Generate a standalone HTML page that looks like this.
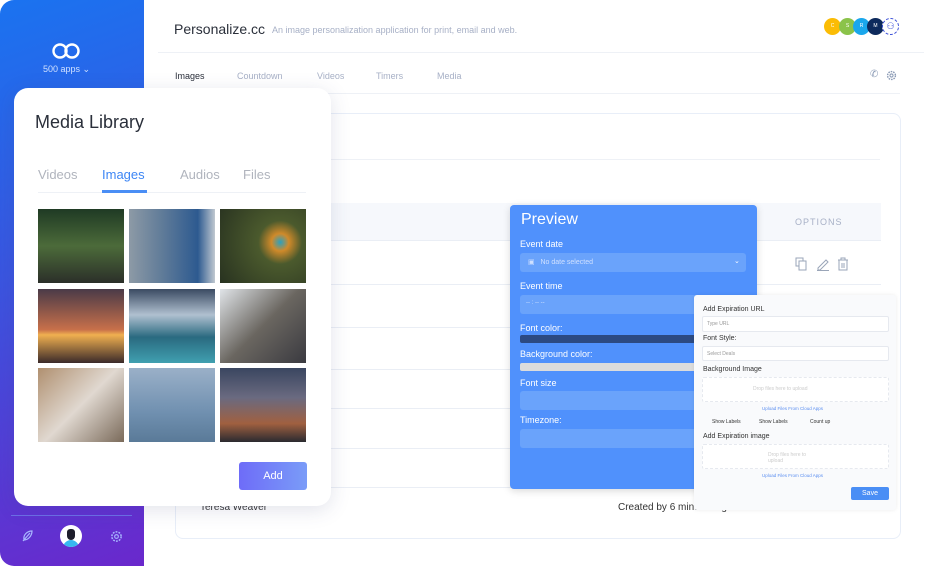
<!DOCTYPE html>
<html><head><meta charset="utf-8"><style>
*{box-sizing:border-box;margin:0;padding:0}
body{width:940px;height:566px;overflow:hidden;background:#fff;font-family:"Liberation Sans",sans-serif;position:relative}
.abs{position:absolute}
.side{left:0;top:0;width:144px;height:566px;border-radius:14px 0 0 14px;background:linear-gradient(160deg,#1a73f0 0%,#3a55e0 45%,#6a28cc 100%)}
.t{position:absolute;white-space:nowrap}
.ph{position:absolute;width:86px;height:74px}
.inp{position:absolute;background:#6aa3fb;border-radius:3px}
.lbl{position:absolute;color:#fff;font-size:9px}
.rl{position:absolute;font-size:7px;color:#333}
.ri{position:absolute;border:1px solid #e6e9ef;background:#fff;border-radius:2px;left:702px;width:187px}
</style></head><body>
<div class="abs side"></div>
<svg class="abs" style="left:52px;top:42px" width="28" height="18" viewBox="0 0 28 18"><circle cx="8" cy="9" r="6.5" fill="none" stroke="#fff" stroke-width="2.4"/><circle cx="20" cy="9" r="6.5" fill="none" stroke="#fff" stroke-width="2.4"/></svg>
<div class="t" style="left:43px;top:64px;font-size:9px;color:#cfe0ff">500 apps ⌄</div>
<div class="abs" style="left:11px;top:515px;width:121px;height:1px;background:#6c6fe6"></div>
<svg class="abs" style="left:20px;top:529px" width="14" height="14" viewBox="0 0 14 14"><path d="M3 12L10 4M4 11C3 6 7 2 12 2C12 7 8 11 4 11" fill="none" stroke="#a9b8ff" stroke-width="1.2"/></svg>
<div class="abs" style="left:60px;top:525px;width:22px;height:22px;border-radius:50%;background:#fff;overflow:hidden"><div class="abs" style="left:3px;top:15px;width:16px;height:10px;border-radius:8px 8px 0 0;background:#37b7f0"></div><div class="abs" style="left:7px;top:4px;width:8px;height:11px;border-radius:4px 4px 5px 5px;background:#1d1d2b"></div></div>
<svg class="abs" style="left:110px;top:530px" width="13" height="13" viewBox="0 0 14 14"><circle cx="7" cy="7" r="2" fill="none" stroke="#a9b8ff" stroke-width="1.2"/><circle cx="7" cy="7" r="5" fill="none" stroke="#a9b8ff" stroke-width="1.6" stroke-dasharray="2 1.2"/></svg>

<div class="t" style="left:174px;top:21px;font-size:14px;color:#2a2f3a">Personalize.cc</div>
<div class="t" style="left:272px;top:25px;font-size:9px;color:#a7b0c6">An image personalization application for print, email and web.</div>
<div class="abs" style="left:158px;top:52px;width:766px;height:1px;background:#eef1f6"></div>
<div class="abs" style="left:824px;top:18px;width:17px;height:17px;border-radius:50%;background:#fbbc05;color:#fff;font-size:5px;text-align:center;line-height:17px">C</div>
<div class="abs" style="left:839px;top:18px;width:17px;height:17px;border-radius:50%;background:#8bc34a;color:#fff;font-size:5px;text-align:center;line-height:17px">S</div>
<div class="abs" style="left:853px;top:18px;width:17px;height:17px;border-radius:50%;background:#1aa7ec;color:#fff;font-size:5px;text-align:center;line-height:17px">R</div>
<div class="abs" style="left:867px;top:18px;width:17px;height:17px;border-radius:50%;background:#0d2a5c;color:#fff;font-size:5px;text-align:center;line-height:17px">M</div>
<div class="abs" style="left:882px;top:18px;width:17px;height:17px;border-radius:50%;border:1px dashed #3b4fd8;background:#fff;color:#3b4fd8;font-size:9px;text-align:center;line-height:15px">⚇</div>
<div class="t" style="left:175px;top:71px;font-size:9px;color:#2a2f3a">Images</div>
<div class="t" style="left:237px;top:71px;font-size:9px;color:#a7b0c6">Countdown</div>
<div class="t" style="left:317px;top:71px;font-size:9px;color:#a7b0c6">Videos</div>
<div class="t" style="left:376px;top:71px;font-size:9px;color:#a7b0c6">Timers</div>
<div class="t" style="left:437px;top:71px;font-size:9px;color:#a7b0c6">Media</div>
<div class="t" style="left:870px;top:69px;font-size:10px;color:#8a9ab5">✆</div>
<svg class="abs" style="left:886px;top:70px" width="11" height="11" viewBox="0 0 14 14"><circle cx="7" cy="7" r="2" fill="none" stroke="#8a9ab5" stroke-width="1.3"/><circle cx="7" cy="7" r="5" fill="none" stroke="#8a9ab5" stroke-width="1.8" stroke-dasharray="2 1.2"/></svg>
<div class="abs" style="left:158px;top:93px;width:742px;height:1px;background:#eef1f6"></div>

<div class="abs" style="left:175px;top:113px;width:726px;height:426px;border:1.5px solid #e8eef8;border-radius:8px"></div>
<div class="abs" style="left:330px;top:159px;width:550px;height:1px;background:#eef1f6"></div>
<div class="abs" style="left:330px;top:203px;width:551px;height:37px;background:#f6f8fc"></div>
<div class="t" style="left:795px;top:217px;font-size:9px;letter-spacing:1px;color:#a7b0c6">OPTIONS</div>
<div class="abs" style="left:330px;top:240px;width:551px;height:1px;background:#eaeef5"></div>
<div class="abs" style="left:330px;top:284px;width:551px;height:1px;background:#eaeef5"></div>
<div class="abs" style="left:330px;top:327px;width:551px;height:1px;background:#eaeef5"></div>
<div class="abs" style="left:330px;top:369px;width:551px;height:1px;background:#eaeef5"></div>
<div class="abs" style="left:330px;top:408px;width:551px;height:1px;background:#eaeef5"></div>
<div class="abs" style="left:330px;top:448px;width:551px;height:1px;background:#eaeef5"></div>
<div class="abs" style="left:175px;top:487px;width:706px;height:1px;background:#eaeef5"></div>
<svg class="abs" style="left:795px;top:257px" width="56" height="14" viewBox="0 0 56 14"><rect x="1" y="1" width="7" height="8" fill="none" stroke="#9aa5b8"/><rect x="4" y="4" width="7" height="9" fill="#fff" stroke="#9aa5b8"/><path d="M23 11L31 3L33 5L25 13H23ZM22 13.5H34" fill="none" stroke="#9aa5b8"/><path d="M43 3H53M46 3V1H50V3M44 3V13H52V3M47 6V11M49 6V11" fill="none" stroke="#9aa5b8"/></svg>
<div class="t" style="left:200px;top:502px;font-size:10px;color:#333">Teresa Weaver</div>
<div class="t" style="left:618px;top:502px;font-size:10px;color:#333">Created by 6 minutes ago</div>

<div class="abs" style="left:14px;top:88px;width:317px;height:418px;background:#fff;border-radius:14px;box-shadow:0 4px 20px rgba(60,70,120,.15)"></div>
<div class="t" style="left:35px;top:112px;font-size:18px;color:#2a2f3a">Media Library</div>
<div class="t" style="left:38px;top:167px;font-size:13px;color:#b0b4bd">Videos</div>
<div class="t" style="left:102px;top:167px;font-size:13px;color:#3d86f5">Images</div>
<div class="t" style="left:180px;top:167px;font-size:13px;color:#b0b4bd">Audios</div>
<div class="t" style="left:243px;top:167px;font-size:13px;color:#b0b4bd">Files</div>
<div class="abs" style="left:38px;top:192px;width:268px;height:1px;background:#eef1f6"></div>
<div class="abs" style="left:102px;top:190px;width:45px;height:3px;background:#4a8ef5"></div>
<div class="ph" style="left:38px;top:209px;background:linear-gradient(180deg,#1f3a24,#4c6b3a 50%,#2b2f29)"></div>
<div class="ph" style="left:129px;top:209px;background:linear-gradient(90deg,#8d9aa6,#5e7a98 40%,#2d5a90 80%,#c0c8d0)"></div>
<div class="ph" style="left:220px;top:209px;background:radial-gradient(circle at 70% 45%,#2aa0c0 0,#d08a2a 12%,#4b5a2d 30%,#283220)"></div>
<div class="ph" style="left:38px;top:289px;background:linear-gradient(180deg,#4a3a48,#c8704a 55%,#f0b050 62%,#3a2a2a)"></div>
<div class="ph" style="left:129px;top:289px;background:linear-gradient(180deg,#3a4a62,#b0c0d0 35%,#2a6a80 65%,#40a0b0)"></div>
<div class="ph" style="left:220px;top:289px;background:linear-gradient(135deg,#e0e4e8,#6a6660 50%,#3a3a40)"></div>
<div class="ph" style="left:38px;top:368px;background:linear-gradient(135deg,#b09070,#e0d8d0 50%,#7a6a5a)"></div>
<div class="ph" style="left:129px;top:368px;background:linear-gradient(180deg,#9ab0c8,#7090b0 60%,#5a7a98)"></div>
<div class="ph" style="left:220px;top:368px;background:linear-gradient(180deg,#3a4660,#6a6a80 40%,#a06040 75%,#2a2a30)"></div>
<div class="abs" style="left:239px;top:462px;width:68px;height:28px;border-radius:3px;background:linear-gradient(90deg,#6e6cf8,#7a9cf8);color:#fff;font-size:11px;text-align:center;line-height:28px">Add</div>

<div class="abs" style="left:510px;top:205px;width:247px;height:284px;background:#5091fc;border-radius:4px;box-shadow:0 2px 8px rgba(0,0,0,.15)"></div>
<div class="t" style="left:521px;top:211px;font-size:16px;color:#fff">Preview</div>
<div class="lbl" style="left:520px;top:239px">Event date</div>
<div class="inp" style="left:520px;top:253px;width:226px;height:19px"></div>
<div class="t" style="left:528px;top:258px;font-size:7px;color:#cfe0ff">▣ &nbsp;&nbsp;No date selected</div>
<div class="t" style="left:734px;top:257px;font-size:7px;color:#fff">⌄</div>
<div class="lbl" style="left:520px;top:281px">Event time</div>
<div class="inp" style="left:520px;top:295px;width:180px;height:19px"></div>
<div class="t" style="left:526px;top:300px;font-size:6px;color:#cfe0ff">-- : -- --</div>
<div class="lbl" style="left:520px;top:323px">Font color:</div>
<div class="abs" style="left:520px;top:335px;width:180px;height:8px;background:#2c4a82;border-radius:2px"></div>
<div class="lbl" style="left:520px;top:349px">Background color:</div>
<div class="abs" style="left:520px;top:363px;width:180px;height:8px;background:#dcdcdc;border-radius:2px"></div>
<div class="lbl" style="left:520px;top:378px">Font size</div>
<div class="inp" style="left:520px;top:391px;width:180px;height:19px"></div>
<div class="lbl" style="left:520px;top:415px">Timezone:</div>
<div class="inp" style="left:520px;top:429px;width:180px;height:19px"></div>

<div class="abs" style="left:694px;top:295px;width:202px;height:215px;background:#f9fafc;border-radius:3px;box-shadow:0 0 4px rgba(0,0,0,.08)"></div>
<div class="rl" style="left:703px;top:306px">Add Expiration URL</div>
<div class="ri" style="top:316px;height:16px"></div>
<div class="t" style="left:707px;top:321px;font-size:5px;color:#999">Type URL</div>
<div class="rl" style="left:703px;top:335px">Font Style:</div>
<div class="ri" style="top:346px;height:15px"></div>
<div class="t" style="left:707px;top:351px;font-size:5px;color:#999">Select Deals</div>
<div class="rl" style="left:703px;top:366px">Background Image</div>
<div class="ri" style="top:377px;height:25px;border-style:dashed"></div>
<div class="t" style="left:753px;top:386px;font-size:5px;color:#ccc">Drop files here to upload</div>
<div class="t" style="left:762px;top:406px;font-size:4.5px;color:#5a8ef0">Upload Files From Cloud Apps</div>
<div class="t" style="left:712px;top:419px;font-size:5px;color:#333">Show Labels</div>
<div class="t" style="left:759px;top:419px;font-size:5px;color:#333">Show Labels</div>
<div class="t" style="left:810px;top:419px;font-size:5px;color:#333">Count up</div>
<div class="rl" style="left:703px;top:433px">Add Expiration image</div>
<div class="ri" style="top:444px;height:25px;border-style:dashed"></div>
<div class="t" style="left:768px;top:452px;font-size:5px;color:#ccc;line-height:6px">Drop files here to<br>upload</div>
<div class="t" style="left:762px;top:473px;font-size:4.5px;color:#5a8ef0">Upload Files From Cloud Apps</div>
<div class="abs" style="left:851px;top:487px;width:38px;height:13px;background:#4a8ef5;border-radius:2px;color:#fff;font-size:7px;text-align:center;line-height:13px">Save</div>
</body></html>
